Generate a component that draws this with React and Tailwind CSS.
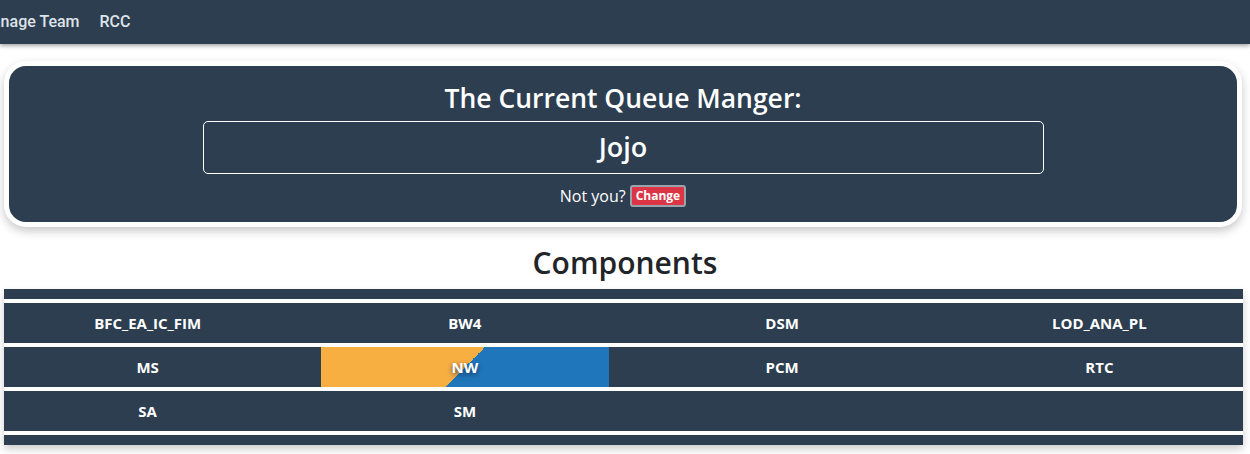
import React from 'react';

const components = [
  ['BFC_EA_IC_FIM', 'BW4', 'DSM', 'LOD_ANA_PL'],
  ['MS', 'NW', 'PCM', 'RTC'],
  ['SA', 'SM', '', ''],
];

const Navbar = () => (
  <nav className="h-[44px] bg-[#2c3e50] shadow-[0_2px_4px_rgba(0,0,0,0.35)] flex items-center overflow-hidden relative z-10">
    <div className="flex items-center gap-[20px] ml-[-22px] text-[16px] font-medium text-[#dfe3e8]" style={{ fontFamily: 'Roboto, "Liberation Sans", sans-serif' }}>
      <a href="#">Manage Team</a>
      <a href="#">RCC</a>
    </div>
  </nav>
);

const QueueCard = () => (
  <div className="mx-[4px] mr-[8px] mt-[17px] rounded-[22px] border-[5px] border-white bg-[#2c3e50] shadow-[0_4px_10px_rgba(0,0,0,0.22)] pt-[14px] pb-[14px] text-white text-center">
    <h2 className="text-[26.5px] font-semibold leading-[36px]">The Current Queue Manger:</h2>
    <div className="w-[841px] h-[53px] mx-auto mt-[5px] rounded-[5px] border border-white flex items-center justify-center text-[27px] font-semibold">
      Jojo
    </div>
    <div className="mt-[10px] flex items-center justify-center gap-[4px] text-[16px]">
      <span>Not you?</span>
      <button className="h-[22px] px-[4px] rounded-[3px] bg-[#dc3545] border-2 border-[#9aa3ab] text-[12px] font-bold leading-none text-white">
        Change
      </button>
    </div>
  </div>
);

const Cell = ({ name }) => {
  if (name === 'NW') {
    return (
      <div
        className="h-full flex items-center justify-center text-white font-bold text-[15px] [text-shadow:0_2px_5px_rgba(20,40,80,0.8)]"
        style={{ background: 'linear-gradient(135deg, #f8af42 50%, #1f76bb 50%)' }}
      >
        {name}
      </div>
    );
  }
  return <div className="h-full flex items-center justify-center text-white font-bold text-[15px]">{name}</div>;
};

export default function App() {
  return (
    <div className="min-h-[454px] bg-white" style={{ fontFamily: '"Open Sans", "Noto Sans", sans-serif' }}>
      <Navbar />
      <QueueCard />
      <h2 className="mt-[16px] text-center text-[30px] font-semibold leading-[40px] text-[#212529]">Components</h2>
      <div className="mt-[6px] ml-[4px] mr-[7px] flex flex-col gap-[4px] shadow-[0_4px_8px_rgba(0,0,0,0.2)]">
        <div className="h-[10px] bg-[#2c3e50]" />
        {components.map((row, i) => (
          <div key={i} className="h-[40px] bg-[#2c3e50] grid grid-cols-4 gap-x-[30px]">
            {row.map((name, j) => (
              <Cell key={j} name={name} />
            ))}
          </div>
        ))}
        <div className="h-[10px] bg-[#2c3e50]" />
      </div>
    </div>
  );
}
